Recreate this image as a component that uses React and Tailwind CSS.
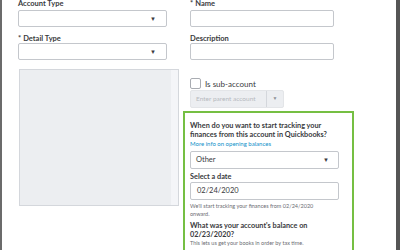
const Caret = () => (
  <span className="text-[6px] text-[#393a3d] leading-none">▼</span>
);

const Label = ({ children, req }) => (
  <div className="text-[7.5px] leading-[10px] font-bold text-[#393a3d] h-[10px]">
    {req && <span className="mr-[2px]">*</span>}
    {children}
  </div>
);

const SelectBox = ({ value, w }) => (
  <div className={`${w} h-[17px] border border-[#c4c7cc] rounded-[2px] bg-white flex items-center justify-between pl-[8px] pr-[10px]`}>
    <span className="text-[8px] text-[#393a3d]">{value}</span>
    <Caret />
  </div>
);

export default function App() {
  return (
    <div
      className="w-[400px] h-[250px] overflow-hidden bg-white flex border-l-2 border-r-4 border-l-[#6b6b6b] border-r-[#555]"
      style={{ fontFamily: 'Lato, "Open Sans", sans-serif' }}
    >
      {/* left column */}
      <div className="ml-[16px] w-[161px] -mt-[1px] flex flex-col">
        <Label>Account Type</Label>
        <div className="mt-[1px]">
          <SelectBox w="w-[149px]" value="" />
        </div>
        <div className="mt-[7px]">
          <Label req>Detail Type</Label>
        </div>
        <div className="mt-[-1px]">
          <SelectBox w="w-[149px]" value="" />
        </div>
        <div className="mt-[9px] ml-[1px] w-[160px] h-[137px] border border-[#d4d7dc] bg-[#eceef1] flex justify-end">
          <div className="w-[7px] h-full bg-[#f4f5f8]" />
        </div>
      </div>

      {/* right column */}
      <div className="ml-[4px] w-[171px] -mt-[1px] flex flex-col">
        <div className="pl-[7px] flex flex-col">
          <Label req>Name</Label>
          <div className="mt-[1px] w-[144px] h-[17px] border border-[#c4c7cc] rounded-[2px]" />
          <div className="mt-[7px]">
            <Label>Description</Label>
          </div>
          <div className="mt-[-1px] w-[144px] h-[17px] border border-[#c4c7cc] rounded-[2px]" />
          <div className="mt-[18px] flex items-center gap-[4px] h-[11px]">
            <div className="w-[11px] h-[11px] border border-[#a9acb2] rounded-[2px] bg-white" />
            <span className="text-[8px] text-[#393a3d]">Is sub-account</span>
          </div>
          <div className="mt-[1px] w-[94px] h-[18px] bg-[#eceef1] border border-[#e3e5e8] rounded-[2px] flex">
            <div className="flex-1 flex items-center pl-[5px] text-[6.5px] text-[#b6b9be] border-r border-[#d4d7dc]">
              Enter parent account
            </div>
            <div className="w-[16px] flex items-center justify-center">
              <span className="text-[5px] text-[#8d9096]">▼</span>
            </div>
          </div>
        </div>

        <div className="mt-[3px] w-[171px] h-[150px] border-2 border-[#75bf43] pl-[5px] pr-[11px] pt-[8px]">
          <div className="text-[7.3px] leading-[9px] font-bold text-[#393a3d]">
            When do you want to start tracking your finances from this account in Quickbooks?
          </div>
          <div className="text-[6px] leading-[9px] text-[#0d8fc9]">More info on opening balances</div>
          <div className="mt-[3px] w-[149px] h-[18px] border border-[#c4c7cc] rounded-[2px] flex items-center justify-between pl-[5px] pr-[9px]">
            <span className="text-[7.5px] text-[#393a3d]">Other</span>
            <Caret />
          </div>
          <div className="mt-[3px] text-[7.3px] leading-[9px] font-bold text-[#393a3d]">Select a date</div>
          <div className="mt-[1px] w-[149px] h-[18px] border border-[#c4c7cc] rounded-[2px] flex items-center pl-[6px]">
            <span className="text-[7.5px] text-[#393a3d]">02/24/2020</span>
          </div>
          <div className="mt-[2px] text-[5.5px] leading-[8px] text-[#6b6c72] w-[140px]">
            We'll start tracking your finances from 02/24/2020 onward.
          </div>
          <div className="mt-[3px] text-[7.3px] leading-[9px] font-bold text-[#393a3d] w-[130px]">
            What was your account's balance on 02/23/2020?
          </div>
          <div className="text-[5.5px] leading-[8px] text-[#6b6c72]">
            This lets us get your books in order by tax time.
          </div>
          <div className="mt-[3px] w-[149px] h-[18px] border border-[#c4c7cc] rounded-[2px]" />
        </div>
      </div>
    </div>
  );
}
